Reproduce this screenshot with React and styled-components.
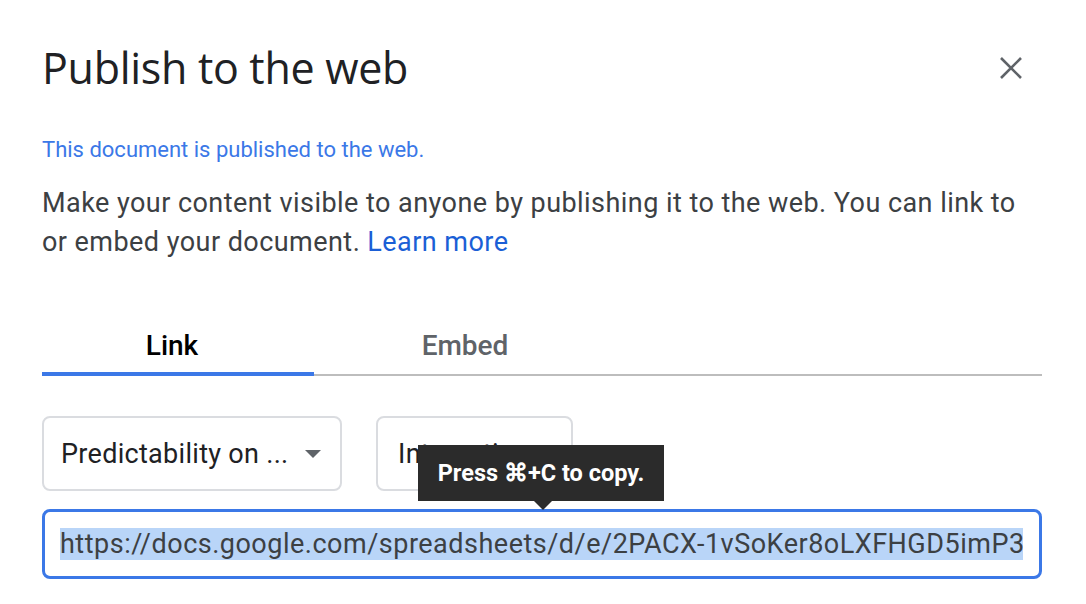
import React from "react";
import styled, { createGlobalStyle } from "styled-components";

const GlobalStyle = createGlobalStyle`
    body {
        margin: 0;
        background: #fff;
        font-family: Roboto, "Liberation Sans", sans-serif;
    }
`;

const Dialog = styled.div`
    width: 1086px;
    height: 604px;
    overflow: hidden;
    padding: 0 44px 0 42px;
    box-sizing: border-box;
`;

const Header = styled.div`
    display: flex;
    justify-content: space-between;
    align-items: center;
    padding-top: 44px;
    height: 48px;
`;

const Title = styled.h1`
    margin: 0;
    font-family: "Open Sans", Roboto, sans-serif;
    font-weight: 400;
    font-size: 43px;
    letter-spacing: -0.3px;
    line-height: 48px;
    color: #202124;
`;

const CloseButton = styled.button`
    border: 0;
    background: none;
    padding: 0;
    margin-right: 20px;
    width: 22px;
    height: 22px;
    display: flex;
    cursor: pointer;
`;

const Status = styled.p`
    margin: 44px 0 0;
    font-size: 22px;
    line-height: 28px;
    color: #3b78e7;
`;

const Description = styled.p`
    margin: 20px 0 0;
    font-size: 27px;
    letter-spacing: 0.45px;
    line-height: 39px;
    color: #3c4043;
`;

const LearnMore = styled.a`
    color: #1b5fd6;
    text-decoration: none;
`;

const TabBar = styled.div`
    display: flex;
    margin-top: 55px;
    border-bottom: 2px solid #bdbdbd;
`;

const Tab = styled.div`
    width: ${p => p.$width}px;
    padding-right: ${p => p.$shift || 0}px;
    box-sizing: border-box;
    display: flex;
    justify-content: center;
    height: 57px;
    padding-top: 12px;
    font-size: 28px;
    font-weight: 500;
    color: ${p => (p.$active ? "#000" : "#5f6368")};
    position: relative;
    &::after {
        content: "";
        display: ${p => (p.$active ? "block" : "none")};
        position: absolute;
        left: 0;
        right: 0;
        bottom: -2px;
        height: 4px;
        background: #3b78e7;
    }
`;

const Controls = styled.div`
    display: flex;
    gap: 34px;
    margin-top: 40px;
`;

const Select = styled.div`
    width: ${p => p.$width}px;
    height: 75px;
    box-sizing: border-box;
    border: 2px solid #dadce0;
    border-radius: 8px;
    display: flex;
    align-items: center;
    padding: 0 19px 0 ${p => p.$padLeft || 17}px;
    font-size: 27px;
    letter-spacing: 0.3px;
    color: #202124;
    gap: 18px;
`;

const SelectText = styled.span`
    flex: 1;
    white-space: nowrap;
    overflow: hidden;
`;

const Caret = styled.span`
    width: 0;
    height: 0;
    border-left: 8px solid transparent;
    border-right: 8px solid transparent;
    border-top: 8px solid #5f6368;
`;

const UrlArea = styled.div`
    position: relative;
    margin-top: 18px;
`;

const UrlBox = styled.div`
    height: 70px;
    box-sizing: border-box;
    border: 3px solid #3b78e7;
    border-radius: 8px;
    padding: 0 16px 0 15px;
    display: flex;
    align-items: center;
    background: #fff;
`;

const UrlText = styled.div`
    overflow: hidden;
    white-space: nowrap;
    font-size: 27px;
    letter-spacing: 0.5px;
    line-height: 33px;
    color: #3c4043;
    span {
        background: #b9d5f8;
    }
`;

const Tooltip = styled.div`
    position: absolute;
    left: 376px;
    top: -64px;
    width: 246px;
    height: 56px;
    background: #2b2b2b;
    color: #fff;
    font-size: 23.5px;
    font-weight: 700;
    display: flex;
    align-items: center;
    justify-content: center;
    z-index: 1;
    &::after {
        content: "";
        position: absolute;
        left: 116px;
        bottom: -9px;
        border-left: 9px solid transparent;
        border-right: 9px solid transparent;
        border-top: 9px solid #2b2b2b;
    }
`;

function CloseIcon() {
    return (
        <svg width="22" height="22" viewBox="0 0 22 22">
            <path d="M1 1L21 21M21 1L1 21" stroke="#5f6368" strokeWidth="2.6" />
        </svg>
    );
}

export default function App() {
    return (
        <>
            <GlobalStyle />
            <Dialog>
                <Header>
                    <Title>Publish to the web</Title>
                    <CloseButton aria-label="Close">
                        <CloseIcon />
                    </CloseButton>
                </Header>
                <Status>This document is published to the web.</Status>
                <Description>
                    Make your content visible to anyone by publishing it to the web. You can link to
                    or embed your document. <LearnMore href="#">Learn more</LearnMore>
                </Description>
                <TabBar>
                    <Tab $active $width={272} $shift={12}>Link</Tab>
                    <Tab $width={302}>Embed</Tab>
                </TabBar>
                <Controls>
                    <Select $width={300}>
                        <SelectText>Predictability on ...</SelectText>
                        <Caret />
                    </Select>
                    <Select $width={197} $padLeft={20}>
                        <SelectText>Interactive</SelectText>
                        <Caret />
                    </Select>
                </Controls>
                <UrlArea>
                    <Tooltip>Press ⌘+C to copy.</Tooltip>
                    <UrlBox>
                        <UrlText>
                            <span>https://docs.google.com/spreadsheets/d/e/2PACX-1vSoKer8oLXFHGD5imP3qWz7rTnVbYhLmK0eXa/pubhtml</span>
                        </UrlText>
                    </UrlBox>
                </UrlArea>
            </Dialog>
        </>
    );
}
